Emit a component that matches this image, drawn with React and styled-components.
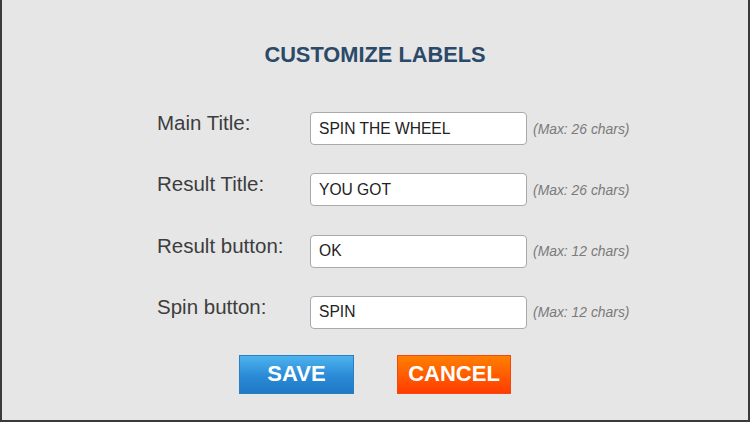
import React from "react";
import styled, { createGlobalStyle } from "styled-components";

const Global = createGlobalStyle`
  html, body { margin: 0; padding: 0; background: #e6e6e6; }
  * { box-sizing: border-box; }
`;

const Frame = styled.div`
  width: 750px;
  height: 422px;
  background: #e6e6e6;
  border-left: 2px solid #3a3a3a;
  border-right: 2px solid #3a3a3a;
  border-bottom: 2px solid #3a3a3a;
  display: flex;
  flex-direction: column;
  align-items: center;
  font-family: "Liberation Sans", Arial, sans-serif;
`;

const Title = styled.h1`
  margin: 42px 0 0;
  font-size: 21.8px;
  line-height: 26px;
  font-weight: bold;
  color: #2b4a68;
`;

const Form = styled.div`
  align-self: stretch;
  margin-top: 44px;
  padding-left: 155px;
  display: grid;
  grid-template-columns: 147px 217px auto;
  column-gap: 6px;
  row-gap: 28.3px;
  align-items: baseline;
`;

const Label = styled.label`
  align-self: start;
  font-size: 20.5px;
  line-height: 22px;
  color: #3d3d3d;
  white-space: nowrap;
`;

const Field = styled.input`
  width: 217px;
  height: 33px;
  margin: 0;
  padding: 0 8px;
  border: 1px solid #a9a9a9;
  border-radius: 4px;
  background: #fff;
  font-family: "Liberation Sans", Arial, sans-serif;
  font-size: 15.6px;
  color: #222;
  outline: none;
`;

const Hint = styled.span`
  font-size: 13.9px;
  font-style: italic;
  color: #7a7a7a;
  white-space: nowrap;
`;

const Buttons = styled.div`
  margin-top: 26px;
  display: flex;
  gap: 43px;
`;

const Button = styled.button`
  width: ${(p) => (p.$variant === "save" ? "115px" : "114px")};
  height: 39px;
  margin: 0;
  padding: 0;
  border: 1px solid ${(p) => (p.$variant === "save" ? "#2a7fc0" : "#f04a10")};
  border-radius: 0;
  font-family: "Liberation Sans", Arial, sans-serif;
  font-size: 22px;
  font-weight: bold;
  color: #fff;
  cursor: pointer;
  background: ${(p) =>
    p.$variant === "save"
      ? "linear-gradient(to bottom, #4db3ee 0%, #2a8ad6 55%, #1f7ac4 100%)"
      : "linear-gradient(to bottom, #ff7f00 0%, #ff5a00 55%, #ff3c00 100%)"};
`;

const rows = [
  { label: "Main Title:", value: "SPIN THE WHEEL", max: 26 },
  { label: "Result Title:", value: "YOU GOT", max: 26 },
  { label: "Result button:", value: "OK", max: 12 },
  { label: "Spin button:", value: "SPIN", max: 12 },
];

export default function App() {
  return (
    <>
      <Global />
      <Frame>
        <Title>CUSTOMIZE LABELS</Title>
        <Form>
          {rows.map((r) => (
            <React.Fragment key={r.label}>
              <Label>{r.label}</Label>
              <Field defaultValue={r.value} maxLength={r.max} />
              <Hint>(Max: {r.max} chars)</Hint>
            </React.Fragment>
          ))}
        </Form>
        <Buttons>
          <Button $variant="save">SAVE</Button>
          <Button $variant="cancel">CANCEL</Button>
        </Buttons>
      </Frame>
    </>
  );
}
